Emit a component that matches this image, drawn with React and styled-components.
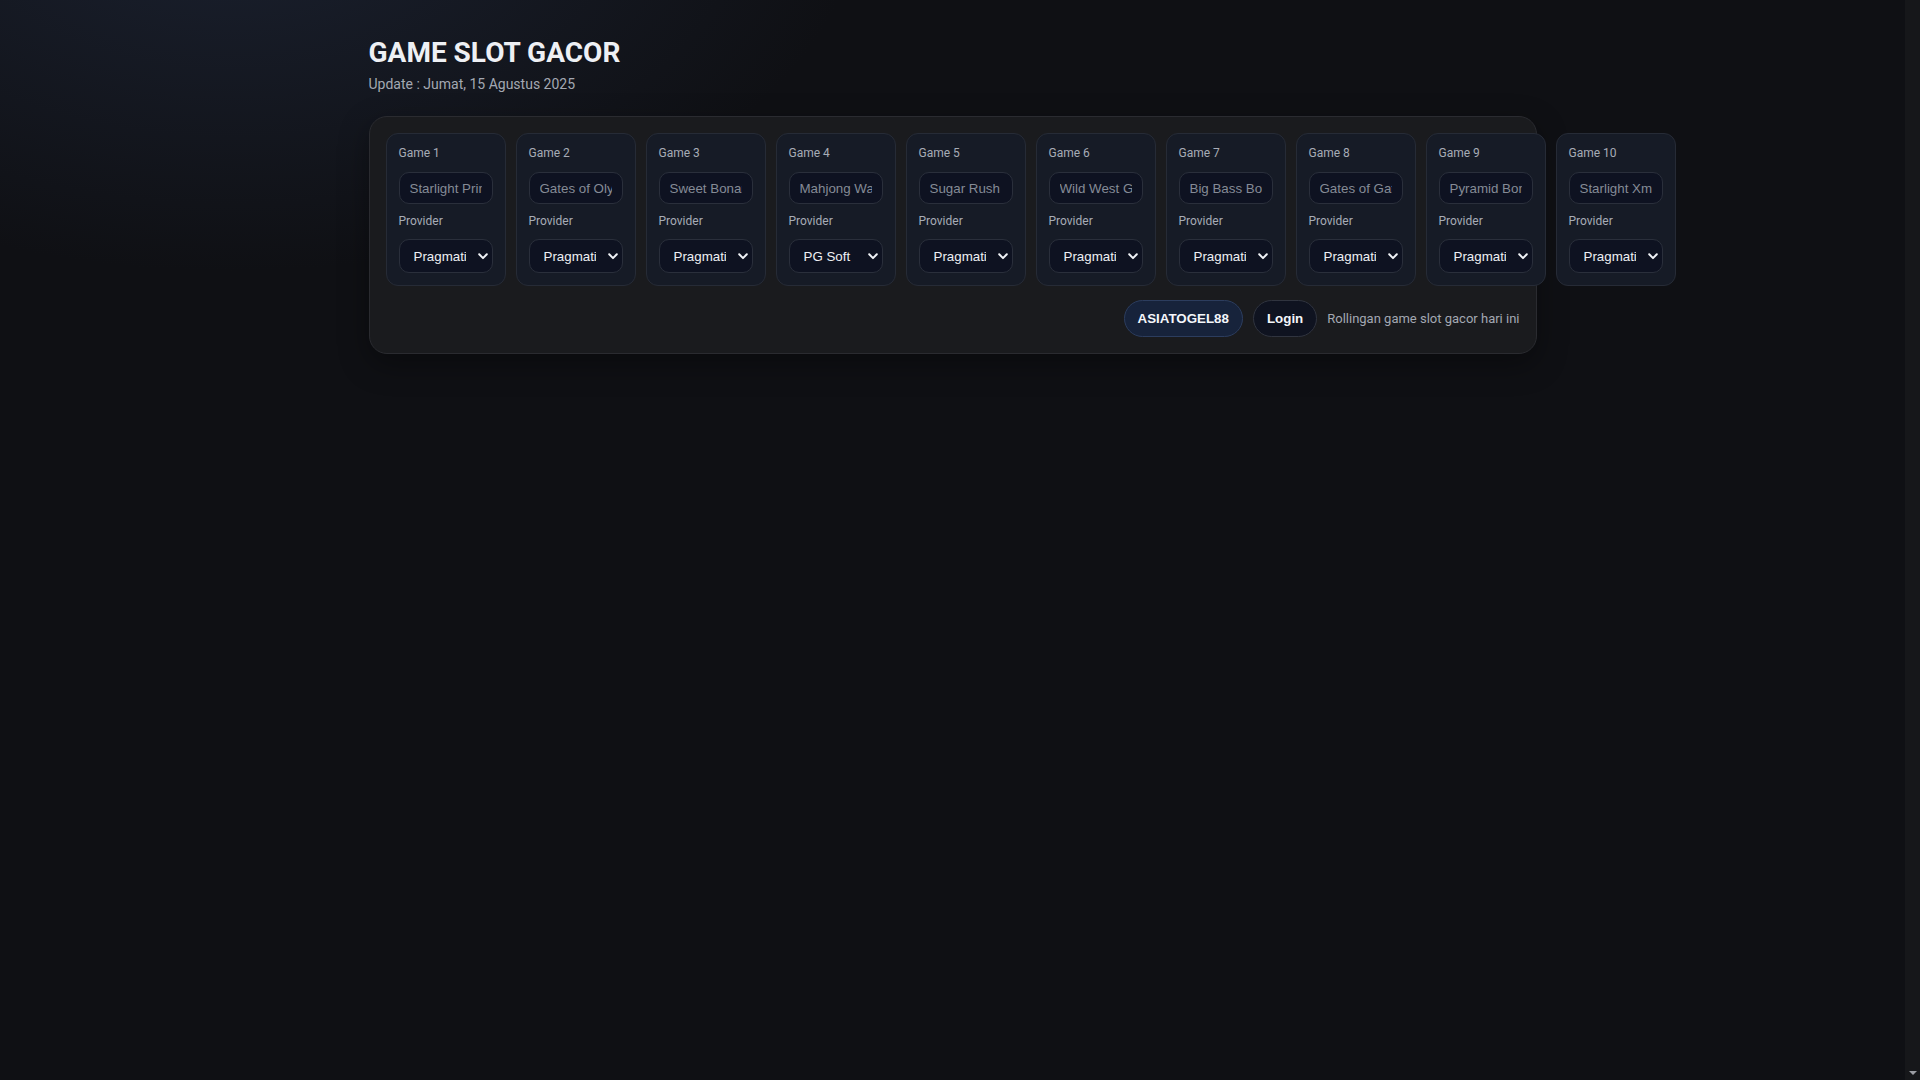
import React from 'react';
import styled, { createGlobalStyle } from 'styled-components';

const GlobalStyle = createGlobalStyle`
  html {
    color-scheme: dark;
    background: #0f1014;
  }
  body {
    margin: 0;
    padding-right: 15px;
    min-height: 100vh;
    font-family: Roboto, "Noto Sans", Arial, sans-serif;
    color: #e7e9ee;
    background:
      radial-gradient(900px 520px at 12% -8%, rgba(30, 38, 56, 0.75), rgba(15, 16, 20, 0) 70%),
      #0f1014;
  }
`;

// stand-in for the classic scrollbar gutter seen in the screenshot
const ScrollGutter = styled.div`
  position: fixed;
  top: 0;
  right: 0;
  bottom: 0;
  width: 15px;
  background: #16171a;
  &::after {
    content: '';
    position: absolute;
    left: 4px;
    bottom: 5px;
    border-left: 4px solid transparent;
    border-right: 4px solid transparent;
    border-top: 4px solid #9b9da3;
  }
`;

const Page = styled.main`
  max-width: 1168px;
  margin: 0 auto;
  padding: 36px 0 40px;
  min-height: 100vh;
`;

const Title = styled.h1`
  margin: 0 0 7px;
  font-size: 28px;
  font-weight: 700;
  line-height: normal;
  color: #eef0f4;
`;

const Updated = styled.p`
  margin: 0 0 24px;
  font-size: 14px;
  color: #a3a8b2;
`;

const Panel = styled.section`
  border: 1px solid #2a2b30;
  border-radius: 18px;
  background: #1a1b1e;
  padding: 16px;
  box-shadow: 0 10px 30px rgba(0, 0, 0, 0.35);
`;

const CardRow = styled.div`
  display: flex;
  flex-wrap: nowrap;
  gap: 10px;
`;

const Card = styled.div`
  flex: 0 0 120px;
  box-sizing: border-box;
  padding: 12px;
  border: 1px solid #262b36;
  border-radius: 12px;
  background: #161b26;
  display: flex;
  flex-direction: column;
`;

const Label = styled.label`
  display: block;
  font-size: 12px;
  line-height: 14px;
  color: #a7acb6;
  margin-bottom: ${(p) => p.$gap}px;
`;

const fieldBase = `
  box-sizing: border-box;
  width: 100%;
  border: 1px solid #2a2f3b;
  border-radius: 10px;
  background: #0e1221;
  font-family: "Liberation Sans", Arial, sans-serif;
  font-size: 13.333px;
  outline: none;
`;

const NameInput = styled.input`
  ${fieldBase}
  height: 32px;
  padding: 0 10px;
  margin-bottom: 10px;
  color: #e7e9ee;
  &::placeholder {
    color: #858b96;
  }
`;

const SelectWrap = styled.div`
  position: relative;
`;

const ProviderSelect = styled.select`
  ${fieldBase}
  appearance: none;
  -webkit-appearance: none;
  height: 34px;
  padding: 0 26px 0 14px;
  color: #eef0f4;
  cursor: pointer;
`;

const Chevron = styled.svg`
  position: absolute;
  right: 5px;
  top: 50%;
  width: 10px;
  height: 7px;
  margin-top: -3px;
  pointer-events: none;
`;

const Footer = styled.div`
  display: flex;
  justify-content: flex-end;
  align-items: center;
  gap: 10px;
  margin-top: 14px;
`;

const PillButton = styled.button`
  font-family: "Liberation Sans", Arial, sans-serif;
  font-size: 13.333px;
  font-weight: 700;
  line-height: normal;
  padding: 10px 13px;
  border-radius: 999px;
  color: #f4f6fa;
  cursor: pointer;
  border: 1px solid ${(p) => (p.$primary ? '#2c3d5e' : '#30343f')};
  background: ${(p) => (p.$primary ? '#17233b' : '#0f1320')};
`;

const Note = styled.span`
  font-size: 13px;
  color: #a3a8b2;
`;

const games = [
  { name: 'Starlight Princess', provider: 'Pragmatic Play' },
  { name: 'Gates of Olympus', provider: 'Pragmatic Play' },
  { name: 'Sweet Bonanza', provider: 'Pragmatic Play' },
  { name: 'Mahjong Ways', provider: 'PG Soft' },
  { name: 'Sugar Rush', provider: 'Pragmatic Play' },
  { name: 'Wild West Gold', provider: 'Pragmatic Play' },
  { name: 'Big Bass Bonanza', provider: 'Pragmatic Play' },
  { name: 'Gates of Gatot Kaca', provider: 'Pragmatic Play' },
  { name: 'Pyramid Bonanza', provider: 'Pragmatic Play' },
  { name: 'Starlight Xmas', provider: 'Pragmatic Play' },
];

const providers = ['Pragmatic Play', 'PG Soft', 'Habanero', 'Microgaming', 'Spadegaming'];

function App() {
  return (
    <>
      <GlobalStyle />
      <Page>
        <Title>GAME SLOT GACOR</Title>
        <Updated>Update : Jumat, 15 Agustus 2025</Updated>
        <Panel>
          <CardRow>
            {games.map((g, i) => (
              <Card key={i}>
                <Label $gap={12}>Game {i + 1}</Label>
                <NameInput placeholder={g.name} />
                <Label $gap={11}>Provider</Label>
                <SelectWrap>
                  <ProviderSelect defaultValue={g.provider}>
                    {providers.map((p) => (
                      <option key={p} value={p}>{p}</option>
                    ))}
                  </ProviderSelect>
                  <Chevron viewBox="0 0 10 7">
                    <path d="M1.2 1.3 L5 5.1 L8.8 1.3" fill="none" stroke="#f2f4f8" strokeWidth="2" strokeLinecap="round" strokeLinejoin="round" />
                  </Chevron>
                </SelectWrap>
              </Card>
            ))}
          </CardRow>
          <Footer>
            <PillButton $primary>ASIATOGEL88</PillButton>
            <PillButton>Login</PillButton>
            <Note>Rollingan game slot gacor hari ini</Note>
          </Footer>
        </Panel>
      </Page>
      <ScrollGutter />
    </>
  );
}

export default App;
